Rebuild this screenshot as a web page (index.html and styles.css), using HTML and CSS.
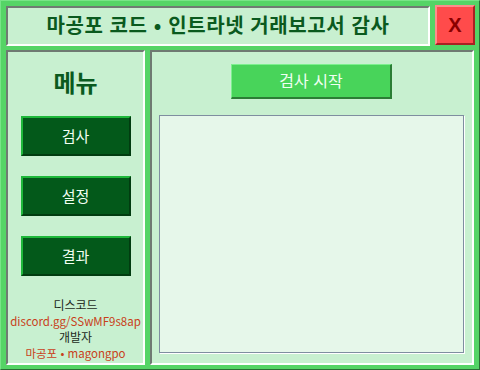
FILE: index.html
```html
<!DOCTYPE html>
<html lang="ko">
<head>
<meta charset="utf-8">
<link rel="stylesheet" href="styles.css">
</head>
<body>
<div class="window">
  <div class="header">
    <div class="title">마공포 코드 • 인트라넷 거래보고서 감사</div>
    <button class="close">X</button>
  </div>
  <div class="main">
    <aside class="menu">
      <div class="menu-title">메뉴</div>
      <div class="menu-buttons">
        <button class="menu-btn">검사</button>
        <button class="menu-btn">설정</button>
        <button class="menu-btn">결과</button>
      </div>
      <div class="footer">
        <div class="label">디스코드</div>
        <div class="link">discord.gg/SSwMF9s8ap</div>
        <div class="label">개발자</div>
        <div class="link">마공포 • magongpo</div>
      </div>
    </aside>
    <section class="content">
      <button class="start">검사 시작</button>
      <div class="output"></div>
    </section>
  </div>
</div>
</body>
</html>
```
FILE: styles.css
```css
* { box-sizing: border-box; }
html, body { margin: 0; padding: 0; }
body {
  width: 480px;
  height: 370px;
  font-family: "Noto Sans CJK KR", "Noto Sans", sans-serif;
}
.window {
  width: 480px;
  height: 370px;
  background: #55d466;
  border: 1px solid;
  border-color: #78e487 #2b6e35 #2b6e35 #78e487;
  padding: 5px 5px 4px 5px;
  display: flex;
  flex-direction: column;
  gap: 4px;
}
.header {
  display: flex;
  gap: 5px;
  height: 40px;
}
.title {
  flex: 1;
  background: #c8f0d0;
  border: 2px solid;
  border-color: #6f7a72 #ffffff #ffffff #6f7a72;
  color: #0a5a1e;
  font-weight: bold;
  font-size: 20px;
  letter-spacing: 0.6px;
  display: flex;
  align-items: center;
  justify-content: center;
  padding-bottom: 3px;
}
.close {
  width: 40px;
  height: 40px;
  margin: -1px -1px 0 0;
  background: #ff4b4b;
  border: 2px solid;
  border-color: #ff8c8c #a82222 #a82222 #ff8c8c;
  color: #8a0000;
  font-family: "Liberation Sans", sans-serif;
  font-weight: bold;
  font-size: 20px;
  padding: 0;
}
.main {
  flex: 1;
  display: flex;
  gap: 5px;
}
.menu {
  width: 139px;
  background: #c8f0d0;
  border: 2px solid;
  border-color: #6f7a72 #ffffff #ffffff #6f7a72;
  display: flex;
  flex-direction: column;
  align-items: center;
}
.menu-title {
  margin-top: 14px;
  line-height: 32px;
  font-size: 24px;
  font-weight: bold;
  color: #0a5a1e;
}
.menu-buttons {
  margin-top: 18px;
  display: flex;
  flex-direction: column;
  gap: 20px;
}
.menu-btn {
  width: 110px;
  height: 40px;
  background: #03591a;
  border: 2px solid;
  border-color: #1fb83b #013c10 #013c10 #1fb83b;
  color: #f2fff2;
  font-family: "Noto Sans CJK KR", sans-serif;
  font-size: 15px;
  padding: 0 0 2px 0;
}
.footer {
  margin-top: 21px;
  text-align: center;
  font-size: 12px;
  line-height: 16px;
}
.label { color: #222a22; }
.link {
  color: #c8401a;
  font-family: "Noto Sans CJK KR", sans-serif;
  font-size: 11.5px;
}
.content {
  flex: 1;
  background: #c8f0d0;
  border: 2px solid;
  border-color: #6f7a72 #ffffff #ffffff #6f7a72;
  display: flex;
  flex-direction: column;
  align-items: center;
  padding: 12px 8px 10px 7px;
}
.start {
  width: 161px;
  height: 35px;
  background: #48d45a;
  border: 2px solid;
  border-color: #7cf08e #2b7d35 #2b7d35 #7cf08e;
  border-top-width: 1px;
  border-left-width: 1px;
  color: #f0fff2;
  font-family: "Noto Sans CJK KR", sans-serif;
  font-size: 16px;
  padding: 0 0 2px 0;
}
.output {
  margin-top: 16px;
  align-self: stretch;
  flex: 1;
  background: #e6f7ea;
  border: 1px solid #7f8ea0;
  box-shadow: 1px 1px 0 #ffffff;
}
```
